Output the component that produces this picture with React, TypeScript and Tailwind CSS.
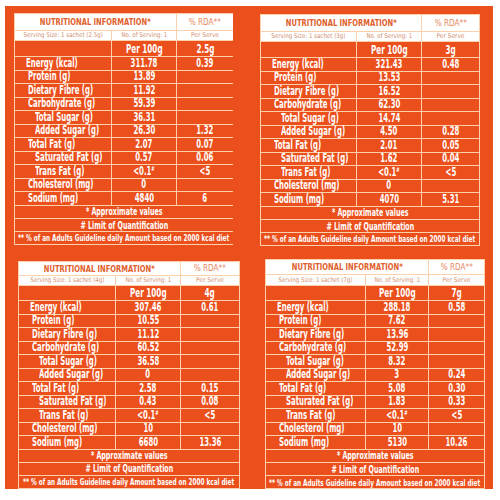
import React from "react";

const labels = [
  "Energy (kcal)",
  "Protein (g)",
  "Dietary Fibre (g)",
  "Carbohydrate (g)",
  "Total Sugar (g)",
  "Added Sugar (g)",
  "Total Fat (g)",
  "Saturated Fat (g)",
  "Trans Fat (g)",
  "Cholesterol (mg)",
  "Sodium (mg)",
];
const pads = ["pl-[11px]", "pl-[13px]", "pl-[13px]", "pl-[13px]", "pl-[20px]", "pl-[20px]", "pl-[13px]", "pl-[20px]", "pl-[20px]", "pl-[13px]", "pl-[13px]"];

type T = {
  serving: string;
  serve: string;
  v1: string[];
  v2: string[];
  cols: string;
  rows: string;
  span: string;
};

const tables: T[] = [
  {
    serving: "Serving Size: 1 sachet (2.5g)",
    serve: "2.5g",
    v1: ["311.78", "13.89", "11.92", "59.39", "36.31", "26.30", "2.07", "0.57", "<0.1", "0", "4840"],
    v2: ["0.39", "", "", "", "", "1.32", "0.07", "0.06", "<5", "", "6"],
    cols: "grid-cols-[96px_64px_56px]",
    rows: "grid-rows-[16px_9px_15px_repeat(11,12.5px)_repeat(3,12.3px)]",
    span: "w-[219px]",
  },
  {
    serving: "Serving Size: 1 sachet (3g)",
    serve: "3g",
    v1: ["321.43", "13.53", "16.52", "62.30", "14.74", "4.50", "2.01", "1.62", "<0.1", "0", "4070"],
    v2: ["0.48", "", "", "", "", "0.28", "0.05", "0.04", "<5", "", "5.31"],
    cols: "grid-cols-[95px_64px_57px]",
    rows: "grid-rows-[16px_9px_15px_repeat(11,12.5px)_repeat(3,12.2px)]",
    span: "w-[220px]",
  },
  {
    serving: "Serving Size: 1 sachet (4g)",
    serve: "4g",
    v1: ["307.46", "10.55", "11.12", "60.52", "36.58", "0", "2.58", "0.43", "<0.1", "10", "6680"],
    v2: ["0.61", "", "", "", "", "", "0.15", "0.08", "<5", "", "13.36"],
    cols: "grid-cols-[96px_64px_58px]",
    rows: "grid-rows-[13px_9px_14px_repeat(11,12.5px)_repeat(3,12px)]",
    span: "w-[222px]",
  },
  {
    serving: "Serving Size: 1 sachet (7g)",
    serve: "7g",
    v1: ["288.18", "7.62", "13.96", "52.99", "8.32", "3", "5.08", "1.83", "<0.1", "10", "5130"],
    v2: ["0.58", "", "", "", "", "0.24", "0.30", "0.33", "<5", "", "10.26"],
    cols: "grid-cols-[99px_62px_55px]",
    rows: "grid-rows-[14px_10px_14px_repeat(11,12.5px)_repeat(3,12.3px)]",
    span: "w-[220px]",
  },
];

const font = "[font-family:'Liberation_Sans_Narrow','DejaVu_Sans_Condensed',sans-serif]";

function Sq({ children, left }: { children: React.ReactNode; left?: boolean }) {
  return (
    <span className={`inline-block whitespace-nowrap scale-x-[0.67] ${left ? "origin-left" : "origin-center"}`}>
      {children}
    </span>
  );
}

function Table({ t }: { t: T }) {
  return (
    <div className={`grid ${t.cols} ${t.rows} gap-px p-px bg-[#fbd0ab] ${t.span} ${font} leading-none`}>
      <div className="col-span-2 bg-white flex items-center justify-center text-[9.5px] font-bold text-[#e0602b]">
        <span className="inline-block whitespace-nowrap scale-x-[0.79]">NUTRITIONAL INFORMATION*</span>
      </div>
      <div className="bg-white flex items-center justify-center text-[9px] text-[#e58660]">
        <span className="inline-block whitespace-nowrap scale-x-[0.9]">% RDA**</span>
      </div>
      <div className="bg-white flex items-center justify-center text-[6.5px] text-[#d0906f] whitespace-nowrap">
        <span className="inline-block scale-x-[0.94]">{t.serving}</span>
      </div>
      <div className="bg-white flex items-center justify-center text-[6.5px] text-[#d0906f] whitespace-nowrap">
        <span className="inline-block scale-x-[0.94]">No. of Serving: 1</span>
      </div>
      <div className="bg-white flex items-center justify-center text-[6.5px] text-[#d0906f]">Per Serve</div>
      <div className="bg-[#ea4f1c]" />
      <div className="bg-[#ea4f1c] flex items-center justify-center text-[12px] font-bold text-white">
        <Sq>Per 100g</Sq>
      </div>
      <div className="bg-[#ea4f1c] flex items-center justify-center text-[12px] font-bold text-white">
        <Sq>{t.serve}</Sq>
      </div>
      {labels.map((l, i) => (
        <React.Fragment key={l}>
          <div className={`bg-[#ea4f1c] flex items-center ${pads[i]} text-[11.5px] font-bold text-white`}>
            <Sq left>{l}</Sq>
          </div>
          <div className="bg-[#ea4f1c] flex items-center justify-center text-[11.5px] font-bold text-white">
            <Sq>
              {t.v1[i]}
              {t.v1[i] === "<0.1" && <sup className="text-[6.5px]">#</sup>}
            </Sq>
          </div>
          <div className="bg-[#ea4f1c] flex items-center justify-center text-[11.5px] font-bold text-white">
            <Sq>{t.v2[i]}</Sq>
          </div>
        </React.Fragment>
      ))}
      <div className="col-span-3 bg-[#ea4f1c] flex items-center justify-center text-[10.5px] font-bold text-white">
        <Sq>* Approximate values</Sq>
      </div>
      <div className="col-span-3 bg-[#ea4f1c] flex items-center justify-center text-[10.5px] font-bold text-white">
        <Sq># Limit of Quantification</Sq>
      </div>
      <div className="col-span-3 bg-[#ea4f1c] flex items-center justify-center text-[9.5px] font-bold text-white">
        <Sq>** % of an Adults Guideline daily Amount based on 2000 kcal diet</Sq>
      </div>
    </div>
  );
}

export default function App() {
  return (
    <div className="w-[500px] h-[500px] bg-white pt-[6px] pl-[5px]">
      <div className="w-[488px] h-[483px] bg-[#ea4f1c]">
        <div className="flex items-start pt-[7px] pl-[9px]">
          <Table t={tables[0]} />
          <div className="ml-[27px] mt-[1px]">
            <Table t={tables[1]} />
          </div>
        </div>
        <div className="flex items-start mt-[13px] pl-[13px]">
          <div className="mt-[2px]">
            <Table t={tables[2]} />
          </div>
          <div className="ml-[25px]">
            <Table t={tables[3]} />
          </div>
        </div>
      </div>
    </div>
  );
}
